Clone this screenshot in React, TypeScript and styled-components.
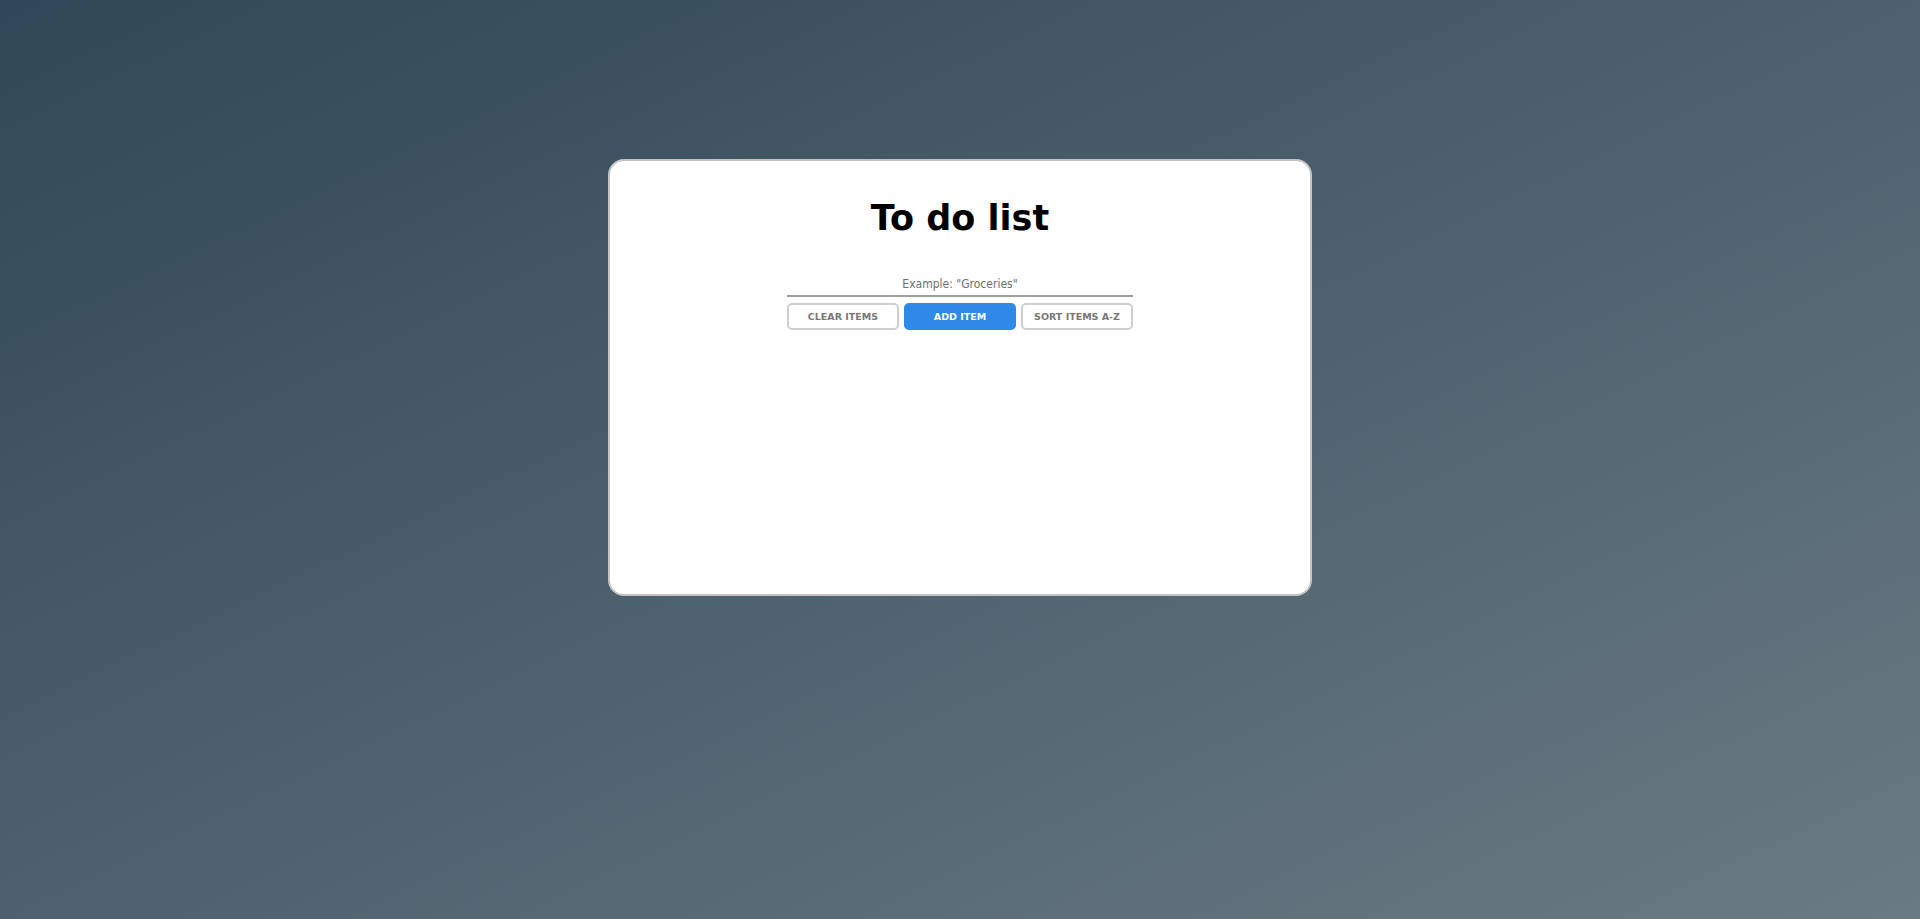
import React, { useState } from "react";
import styled, { createGlobalStyle } from "styled-components";

const Global = createGlobalStyle`
  html, body { margin: 0; padding: 0; }
  body {
    min-height: 919px;
    background: linear-gradient(to bottom right, #314757, #6a7a84);
    font-family: "DejaVu Sans", Verdana, sans-serif;
  }
`;

const Page = styled.div`
  min-height: 919px;
  display: flex;
  justify-content: center;
  align-items: flex-start;
  padding-top: 159px;
  box-sizing: border-box;
`;

const Card = styled.div`
  width: 704px;
  height: 437px;
  box-sizing: border-box;
  background: #fff;
  border: 2px solid #c4c4c4;
  border-radius: 16px;
  display: flex;
  flex-direction: column;
  align-items: center;
`;

const Title = styled.h1`
  margin: 37px 0 0;
  font-family: "DejaVu Sans", Verdana, sans-serif;
  font-weight: 700;
  font-size: 35px;
  line-height: 40px;
  color: #000;
`;

const Form = styled.div`
  width: 346px;
  margin-top: 36px;
  display: flex;
  flex-direction: column;
  gap: 6px;
`;

const Input = styled.input`
  width: 100%;
  box-sizing: border-box;
  border: none;
  border-bottom: 2px solid #9e9e9e;
  outline: none;
  text-align: center;
  font-family: "DejaVu Sans Condensed", "DejaVu Sans", sans-serif;
  font-stretch: condensed;
  font-size: 12px;
  height: 23px;
  padding: 0 0 2px;
  color: #333;
  &::placeholder { color: #6f6f6f; }
`;

const Buttons = styled.div`
  display: flex;
  justify-content: space-between;
`;

const Button = styled.button<{ $primary?: boolean }>`
  width: 112px;
  height: 27px;
  box-sizing: border-box;
  border-radius: 5px;
  border: 2px solid ${(p) => (p.$primary ? "#2e89e8" : "#cfcfcf")};
  background: ${(p) => (p.$primary ? "#2e89e8" : "#fff")};
  color: ${(p) => (p.$primary ? "#fff" : "#777")};
  font-family: "DejaVu Sans", Verdana, sans-serif;
  font-weight: 700;
  font-size: 9.5px;
  text-transform: uppercase;
  padding: 0;
  cursor: pointer;
`;

export default function App() {
  const [value, setValue] = useState("");
  return (
    <>
      <Global />
      <Page>
        <Card>
          <Title>To do list</Title>
          <Form>
            <Input
              value={value}
              onChange={(e) => setValue(e.target.value)}
              placeholder={'Example: "Groceries"'}
            />
            <Buttons>
              <Button>Clear items</Button>
              <Button $primary>Add item</Button>
              <Button>Sort items A-Z</Button>
            </Buttons>
          </Form>
        </Card>
      </Page>
    </>
  );
}
